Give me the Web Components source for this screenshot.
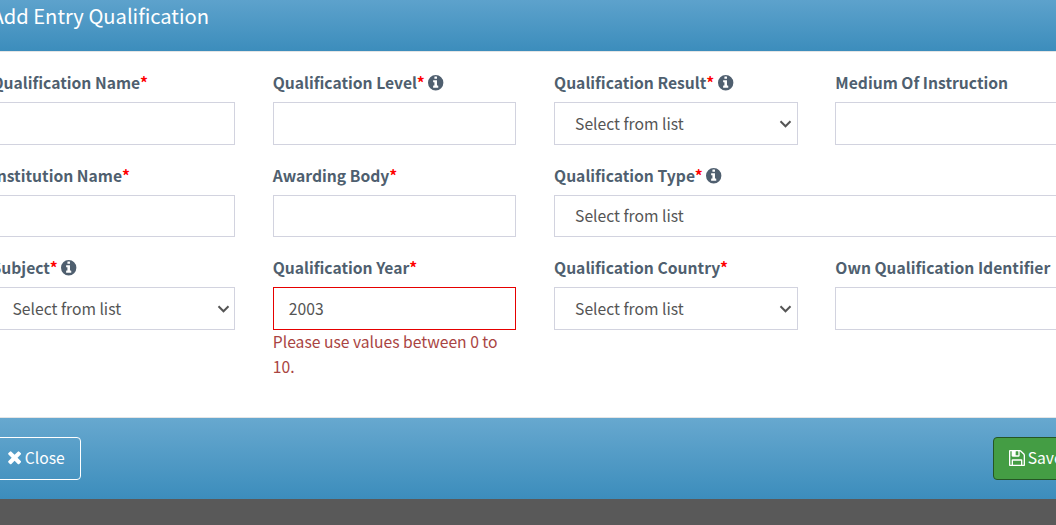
<!DOCTYPE html>
<html lang="en">
<head>
<meta charset="utf-8">
<title>Add Entry Qualification</title>
<style>
html, body { margin: 0; height: 100%; overflow: hidden; }
body { background: #595959; font-family: "Noto Sans CJK SC", "Noto Sans", sans-serif; font-size: 15.68px; color: #555; }
</style>
</head>
<body>
<entry-dialog>
  <span slot="title">Add Entry Qualification</span>
  <form-field label="Qualification Name" required></form-field>
  <form-field label="Qualification Level" required info></form-field>
  <form-field label="Qualification Result" required info kind="select"></form-field>
  <form-field label="Medium Of Instruction"></form-field>
  <form-field label="Institution Name" required></form-field>
  <form-field label="Awarding Body" required></form-field>
  <form-field label="Qualification Type" required info kind="select" wide></form-field>
  <form-field label="Subject" required info kind="select"></form-field>
  <form-field label="Qualification Year" required value="2003" invalid>Please use values between 0 to 10.</form-field>
  <form-field label="Qualification Country" required kind="select"></form-field>
  <form-field label="Own Qualification Identifier"></form-field>
  <action-button slot="actions" icon="times">Close</action-button>
  <action-button slot="actions" icon="save" primary>Save</action-button>
</entry-dialog>
<script>
const ICONS = {
  info: 'M1024 1376v-160q0-14-9-23t-23-9h-96v-512q0-14-9-23t-23-9h-320q-14 0-23 9t-9 23v160q0 14 9 23t23 9h96v320h-96q-14 0-23 9t-9 23v160q0 14 9 23t23 9h448q14 0 23-9t9-23zM896 480v-160q0-14-9-23t-23-9h-192q-14 0-23 9t-9 23v160q0 14 9 23t23 9h192q14 0 23-9t9-23z',
  times: 'M1490 1322q0 40-28 68l-136 136q-28 28-68 28t-68-28l-294-294-294 294q-28 28-68 28t-68-28l-136-136q-28-28-28-68t28-68l294-294-294-294q-28-28-28-68t28-68l136-136q28-28 68-28t68 28l294 294 294-294q28-28 68-28t68 28l136 136q28 28 28 68t-28 68l-294 294 294 294q28 28 28 68z',
  save: 'M512 1536h768v-384h-768v384zm896 0h128v-896q0-14-10-38.5t-20-34.5l-281-281q-10-10-34-20t-39-10v416q0 40-28 68t-68 28h-576q-40 0-68-28t-28-68v-416h-128v1280h128v-416q0-40 28-68t68-28h832q40 0 68 28t28 68v416zm-384-928v-320q0-13-9.5-22.5t-22.5-9.5h-192q-13 0-22.5 9.5t-9.5 22.5v320q0 13 9.5 22.5t22.5 9.5h192q13 0 22.5-9.5t9.5-22.5zm640 32v928q0 40-28 68t-68 28h-1344q-40 0-68-28t-28-68v-1344q0-40 28-68t68-28h928q40 0 88 20t76 48l280 280q28 28 48 76t20 88z'
};
// Info: a disc with the letter shape punched out, centred on the disc.
ICONS.info = 'M1536 896a768 768 0 1 1-1536 0a768 768 0 1 1 1536 0z' + ICONS.info;
const BOX = { info: '0 128 1536 1536', times: '302 334 1188 1220', save: '128 128 1536 1536' };

customElements.define('glyph-icon', class extends HTMLElement {
  connectedCallback() {
    const n = this.getAttribute('name');
    this.attachShadow({ mode: 'open' }).innerHTML = `
      <style>:host{display:block;flex:none;width:15.4px;height:15.4px}svg{display:block;width:100%;height:100%;overflow:visible}</style>
      <svg viewBox="${BOX[n]}" fill="currentColor" fill-rule="evenodd"><path d="${ICONS[n]}"/></svg>`;
  }
});

customElements.define('form-field', class extends HTMLElement {
  connectedCallback() {
    const has = a => this.hasAttribute(a);
    const select = this.getAttribute('kind') === 'select';
    const arrow = select && !has('wide');
    this.attachShadow({ mode: 'open' }).innerHTML = `
      <style>
        :host{display:block;min-width:0}
        :host([wide]){grid-column:span 2}
        .label{display:flex;align-items:center;height:26px;margin-bottom:6.05px;font-weight:700;line-height:26px;color:#4f5f6f;white-space:nowrap}
        .label i{font-style:normal;color:#f00;margin-left:-.2px}
        .label glyph-icon{margin:0 0 .6px 3.5px}
        .box{box-sizing:border-box;height:42.6px;border:1px solid #d2d3df;background:#fff;display:flex;align-items:center;justify-content:space-between;padding:0 4.5px 0 15px;line-height:26px}
        .box.select{padding-left:20px}
        .box span{margin-top:1.1px}
        :host([invalid]) .box{border-color:#e60000}
        .box svg{display:block;width:13px;height:8px;margin-top:.6px}
        .error{color:#a94442;line-height:25px;width:236px;margin-top:-.3px}
      </style>
      <div class="label"><span>${this.getAttribute('label')}</span>${has('required') ? '<i>*</i>' : ''}${has('info') ? '<glyph-icon name="info"></glyph-icon>' : ''}</div>
      <div class="box ${select ? 'select' : ''}"><span>${select ? 'Select from list' : this.getAttribute('value') || ''}</span>${arrow ? '<svg viewBox="0 0 13 8"><path d="M1.5 1.3L6.5 6.3L11.5 1.3" fill="none" stroke="#555" stroke-width="2"/></svg>' : ''}</div>
      ${has('invalid') ? '<div class="error"><slot></slot></div>' : ''}`;
  }
});

customElements.define('action-button', class extends HTMLElement {
  connectedCallback() {
    const n = this.getAttribute('icon');
    this.attachShadow({ mode: 'open' }).innerHTML = `
      <style>
        :host{box-sizing:border-box;display:flex;align-items:center;height:43px;padding:0 15px;border:1px solid #fff;border-radius:4px;color:#fff;white-space:nowrap;line-height:26px}
        :host([primary]){background:#449d44;border-color:#255625;padding-right:15.4px}
        glyph-icon{margin-right:4px;width:13.2px;height:13.2px}
        :host([primary]) glyph-icon{margin:0 2.4px 0 0;width:16px;height:16px}
      </style>
      <glyph-icon name="${n}"></glyph-icon><span><slot></slot></span>`;
  }
});

customElements.define('entry-dialog', class extends HTMLElement {
  connectedCallback() {
    this.attachShadow({ mode: 'open' }).innerHTML = `
      <style>
        :host{display:block;width:1106px;margin-left:-27px;background:#fff;height:499px;overflow:hidden}
        header{box-sizing:border-box;height:52px;padding-left:18.5px;border-bottom:1px solid #e5e5e5;background:linear-gradient(#5da2cc,#3c8dbc);background-clip:padding-box;color:#fff;font-size:20.15px;line-height:32px}
        main{box-sizing:border-box;height:365px;padding:18.05px 0 0 18.5px;display:grid;grid-template-columns:repeat(4,243.6px);column-gap:37.7px;grid-template-rows:92.5px 92.5px auto;align-content:start}
        footer{box-sizing:border-box;height:82px;border-top:1px solid #e5e5e5;background:linear-gradient(#67a8cf,#3c8dbc);background-clip:padding-box;display:flex;justify-content:space-between;align-items:center;padding:0 0 1px 18.5px}
      </style>
      <header><slot name="title"></slot></header>
      <main><slot></slot></main>
      <footer><slot name="actions"></slot></footer>`;
  }
});
</script>
</body>
</html>
